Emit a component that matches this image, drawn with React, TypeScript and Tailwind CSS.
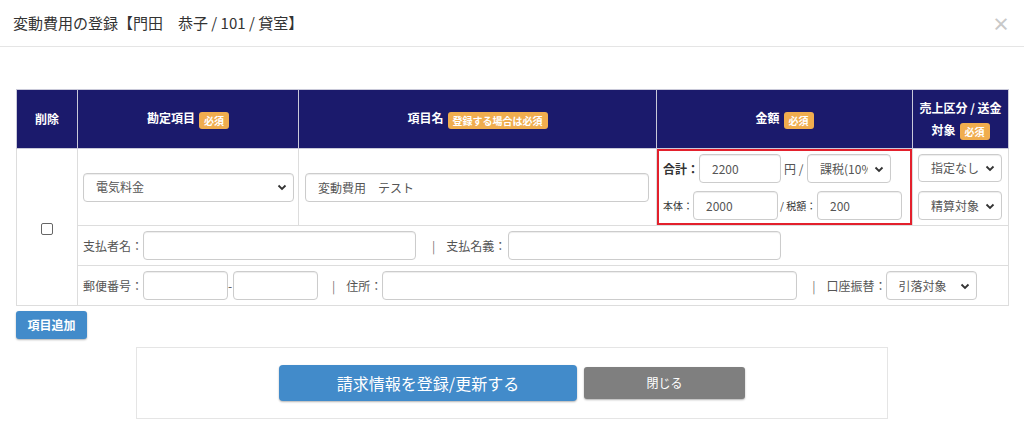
import React from "react";

const font = { fontFamily: '"Noto Sans CJK JP", "Liberation Sans", sans-serif' };

function Badge({ children }: { children: React.ReactNode }) {
  return (
    <span className="ml-1 inline-block rounded-[3px] bg-[#f0ad4e] px-[5px] py-[1px] text-[10px] font-bold leading-[15px] text-white align-middle">
      {children}
    </span>
  );
}

function Chevron() {
  return (
    <svg width="10" height="10" viewBox="0 0 10 10" className="pointer-events-none absolute right-[7px] top-1/2 -translate-y-1/2">
      <path d="M1.5 3.5 L5 7 L8.5 3.5" fill="none" stroke="#333" strokeWidth="1.8" />
    </svg>
  );
}

function Select({ value, className }: { value: string; className: string }) {
  return (
    <div className={`relative ${className}`}>
      <div className="flex h-full items-center rounded-[4px] border border-[#ccc] bg-white pl-[12px] pr-[22px] text-[12px] text-[#555] shadow-[inset_0_1px_1px_rgba(0,0,0,0.075)]">
        <span className="block overflow-hidden whitespace-nowrap">{value}</span>
      </div>
      <Chevron />
    </div>
  );
}

function Input({ value = "", className }: { value?: string; className: string }) {
  return (
    <input
      readOnly
      value={value}
      className={`shrink-0 rounded-[4px] border border-[#ccc] bg-white px-[12px] text-[12px] text-[#555] shadow-[inset_0_1px_1px_rgba(0,0,0,0.075)] outline-none ${className}`}
    />
  );
}

export default function App() {
  return (
    <div className="h-[440px] w-[1024px] bg-white text-[#333]" style={font}>
      {/* Header */}
      <div className="flex h-[47px] items-center justify-between border-b border-[#e5e5e5] pl-[13px] pr-[14px]">
        <h4 className="text-[15px] text-[#333]">変動費用の登録【門田　恭子 / 101 / 貸室】</h4>
        <span className="text-[18px] font-bold leading-none text-[#c8c8c8]">×</span>
      </div>

      <div className="px-4 pt-[42px]">
        <table className="w-[992px] table-fixed border-collapse text-[12px]">
          <colgroup>
            <col className="w-[61px]" />
            <col className="w-[221px]" />
            <col className="w-[358px]" />
            <col className="w-[256px]" />
            <col className="w-[96px]" />
          </colgroup>
          <thead>
            <tr className="h-[59px] bg-[#1b1a6c] text-[12px] font-bold text-white">
              <th className="border border-[#c9c9d9]">削除</th>
              <th className="border border-[#c9c9d9]">
                勘定項目<Badge>必須</Badge>
              </th>
              <th className="border border-[#c9c9d9]">
                項目名<Badge>登録する場合は必須</Badge>
              </th>
              <th className="border border-[#c9c9d9]">
                金額<Badge>必須</Badge>
              </th>
              <th className="border border-[#c9c9d9] leading-[22px]">
                売上区分 / 送金
                <br />
                対象<Badge>必須</Badge>
              </th>
            </tr>
          </thead>
          <tbody>
            <tr className="h-[77px]">
              <td rowSpan={3} className="border border-[#ddd] text-center align-middle">
                <span className="inline-block h-[12px] w-[12px] rounded-[2px] border border-[#666] bg-white align-middle" />
              </td>
              <td className="border border-[#ddd] px-[5px]">
                <Select value="電気料金" className="h-[29px] w-[211px]" />
              </td>
              <td className="border border-[#ddd] px-[6px]">
                <Input value="変動費用　テスト" className="h-[29px] w-[344px]" />
              </td>
              <td className="border border-[#ddd] p-0">
                <div className="flex h-[76px] flex-col justify-center gap-[8px] border-2 border-[#e3202c] pl-[4px] whitespace-nowrap">
                  <div className="flex items-center">
                    <span className="w-[36px] shrink-0 text-[12px] font-bold text-[#333]">合計：</span>
                    <Input value="2200" className="h-[29px] w-[82px]" />
                    <span className="w-[26px] shrink-0 pl-[3px] text-[12px] text-[#555]">円 /</span>
                    <Select value="課税(10%" className="h-[29px] w-[84px] shrink-0" />
                  </div>
                  <div className="flex items-center">
                    <span className="w-[30px] shrink-0 text-[10px] text-[#333]">本体：</span>
                    <Input value="2000" className="h-[29px] w-[85px]" />
                    <span className="w-[39px] shrink-0 pl-[2px] text-[10px] text-[#333]">/ 税額：</span>
                    <Input value="200" className="h-[29px] w-[85px]" />
                  </div>
                </div>
              </td>
              <td className="border border-[#ddd] px-[5px]">
                <div className="flex flex-col gap-[9px]">
                  <Select value="指定なし" className="h-[28px] w-[84px]" />
                  <Select value="精算対象" className="h-[29px] w-[84px]" />
                </div>
              </td>
            </tr>
            <tr className="h-[40px]">
              <td colSpan={4} className="border border-[#ddd] px-[5px]">
                <div className="flex items-center whitespace-nowrap text-[12px] text-[#555]">
                  <span className="w-[60px] shrink-0">支払者名：</span>
                  <Input className="h-[29px] w-[273px]" />
                  <span className="ml-[16px] mr-[11px] text-[#777]">|</span>
                  <span className="w-[62px] shrink-0">支払名義：</span>
                  <Input className="h-[29px] w-[273px]" />
                </div>
              </td>
            </tr>
            <tr className="h-[40px]">
              <td colSpan={4} className="border border-[#ddd] px-[5px]">
                <div className="flex items-center whitespace-nowrap text-[12px] text-[#555]">
                  <span className="w-[60px] shrink-0">郵便番号：</span>
                  <Input className="h-[29px] w-[85px]" />
                  <span className="w-[5px] shrink-0">-</span>
                  <Input className="h-[29px] w-[85px]" />
                  <span className="ml-[14px] mr-[11px] text-[#777]">|</span>
                  <span className="w-[36px] shrink-0">住所：</span>
                  <Input className="h-[29px] w-[415px]" />
                  <span className="ml-[15px] mr-[11px] text-[#777]">|</span>
                  <span className="w-[59px] shrink-0">口座振替：</span>
                  <Select value="引落対象" className="h-[29px] w-[91px] shrink-0" />
                </div>
              </td>
            </tr>
          </tbody>
        </table>

        <button className="mt-[5px] h-[28px] w-[71px] rounded-[3px] bg-[#428bca] text-[12px] font-bold text-white shadow-[0_1px_2px_rgba(0,0,0,0.3)]">
          項目追加
        </button>

        <div className="ml-[120px] mt-[8px] flex h-[72px] w-[752px] items-center justify-center gap-[7px] border border-[#e5e5e5]">
          <button className="h-[36px] w-[298px] rounded-[4px] bg-[#428bca] text-[16px] text-white shadow-[0_1px_2px_rgba(0,0,0,0.3)]">
            請求情報を登録/更新する
          </button>
          <button className="h-[32px] w-[161px] rounded-[3px] bg-[#7f7f7f] text-[12px] text-white shadow-[0_1px_2px_rgba(0,0,0,0.3)]">
            閉じる
          </button>
        </div>
      </div>
    </div>
  );
}
